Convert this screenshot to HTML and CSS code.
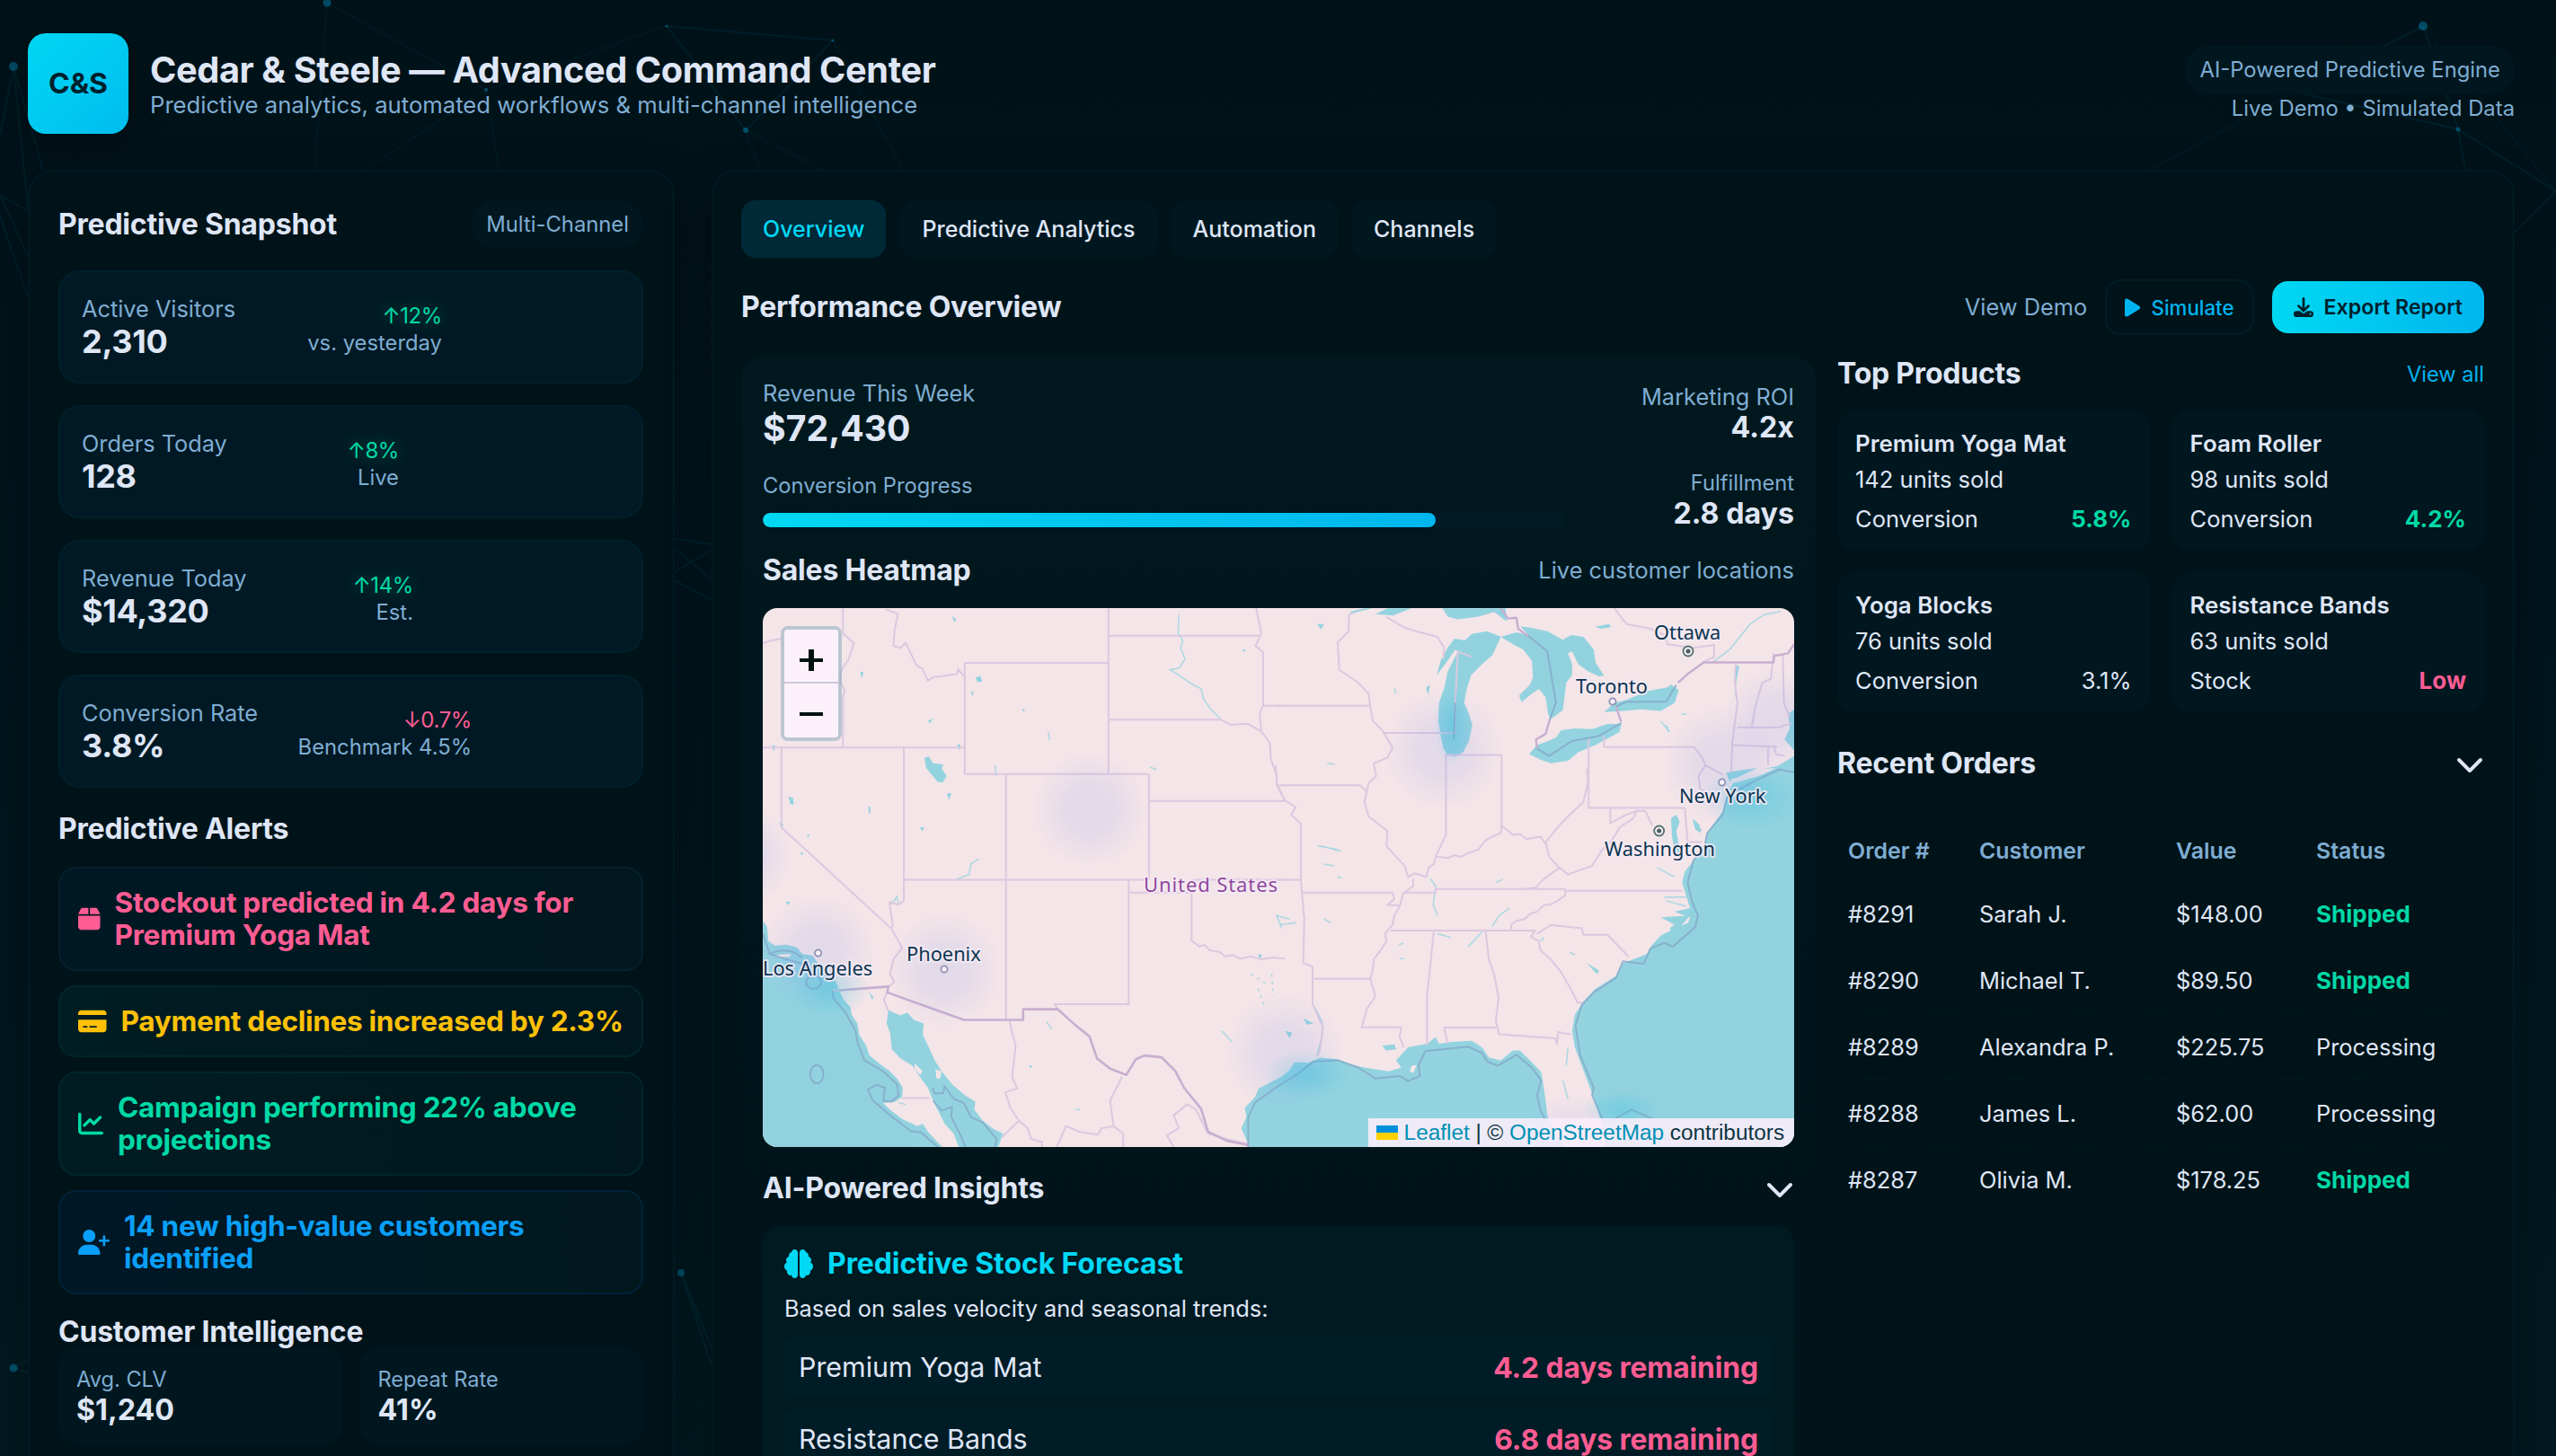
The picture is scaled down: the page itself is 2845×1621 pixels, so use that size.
FILE: index.html
```html
<!DOCTYPE html>
<html lang="en">
<head>
<meta charset="utf-8">
<title>Cedar &amp; Steele — Advanced Command Center</title>
<link rel="stylesheet" href="styles.css">
</head>
<body>
<svg class="network" viewBox="0 0 2845 1621" aria-hidden="true">
  <g fill="none" stroke="#00b4f0" stroke-width="2">
    <path opacity=".08" d="M742 29L927 45L830 145Z"/>
    <path opacity=".04" d="M364 3L541 100L742 29M364 3L350 190M541 100L405 190M541 100L556 190M830 145L846 190M830 145L918 190M927 45L1006 190"/>
    <path opacity=".07" d="M15 74L0 150M15 74L32 240M15 74L48 190M0 217L31 235M0 217L31 285M0 240L31 330"/>
    <path opacity=".08" d="M2697 29L2554 102L2736 144L2845 213L2798 260M2697 29L2736 144L2744 190"/>
    <path opacity=".04" d="M2554 102L2392 190M2697 29L2845 213"/>
    <path opacity=".08" d="M751 600L792 606M751 611L792 645M751 637L792 612M751 646L792 668M758 1417L792 1520M758 1417L792 1500M15 1523L31 1528M15 1523L31 1514"/>
  </g>
  <g fill="#00b4f0" opacity=".34">
    <circle cx="364" cy="3" r="4.5"/><circle cx="15" cy="74" r="5"/><circle cx="541" cy="100" r="2"/><circle cx="830" cy="145" r="3"/><circle cx="742" cy="29" r="1.5"/><circle cx="927" cy="45" r="1.5"/>
    <circle cx="2697" cy="29" r="5"/><circle cx="2554" cy="102" r="2"/><circle cx="2736" cy="144" r="2.5"/><circle cx="758" cy="1417" r="4"/><circle cx="15" cy="1523" r="4.5"/>
  </g>
</svg>

<header class="header">
  <div class="logo">C&amp;S</div>
  <div class="brand">
    <h1 class="brand-title">Cedar &amp; Steele — Advanced Command Center</h1>
    <p class="brand-sub">Predictive analytics, automated workflows &amp; multi-channel intelligence</p>
  </div>
  <div class="header-meta">
    <span class="pill">AI-Powered Predictive Engine</span>
    <span class="meta-line">Live Demo • Simulated Data</span>
  </div>
</header>

<div class="layout">
  <aside class="panel panel-left">
    <div class="row">
      <h2 class="heading">Predictive Snapshot</h2>
      <span class="pill">Multi-Channel</span>
    </div>
    <div class="kpis">
      <div class="kpi"><div class="kpi-body kpi-visitors">
        <div><div class="label">Active Visitors</div><div class="kpi-value">2,310</div></div>
        <div class="kpi-side"><div class="delta up">↑12%</div><div class="kpi-note">vs. yesterday</div></div>
      </div></div>
      <div class="kpi"><div class="kpi-body kpi-orders">
        <div><div class="label">Orders Today</div><div class="kpi-value">128</div></div>
        <div class="kpi-side"><div class="delta up">↑8%</div><div class="kpi-note">Live</div></div>
      </div></div>
      <div class="kpi"><div class="kpi-body kpi-revenue">
        <div><div class="label">Revenue Today</div><div class="kpi-value">$14,320</div></div>
        <div class="kpi-side"><div class="delta up">↑14%</div><div class="kpi-note">Est.</div></div>
      </div></div>
      <div class="kpi"><div class="kpi-body kpi-conversion">
        <div><div class="label">Conversion Rate</div><div class="kpi-value">3.8%</div></div>
        <div class="kpi-side"><div class="delta down">↓0.7%</div><div class="kpi-note">Benchmark 4.5%</div></div>
      </div></div>
    </div>

    <h2 class="heading alerts-heading">Predictive Alerts</h2>
    <div class="alerts">
      <div class="alert alert-danger">
        <svg class="fa" viewBox="0 0 448 512"><path d="M50.7 58.5L0 160H208V32H93.7C75.5 32 58.9 42.3 50.7 58.5zM240 160H448L397.3 58.5C389.1 42.3 372.5 32 354.3 32H240V160zm208 32H0V416c0 35.3 28.7 64 64 64H384c35.3 0 64-28.7 64-64V192z"/></svg>
        <span>Stockout predicted in 4.2 days for Premium Yoga Mat</span>
      </div>
      <div class="alert alert-warn">
        <svg class="fa" viewBox="0 0 576 512"><path d="M64 32C28.7 32 0 60.7 0 96v32H576V96c0-35.3-28.7-64-64-64H64zM576 224H0V416c0 35.3 28.7 64 64 64H512c35.3 0 64-28.7 64-64V224zM112 352h64c8.8 0 16 7.2 16 16s-7.2 16-16 16H112c-8.8 0-16-7.2-16-16s7.2-16 16-16zm112 16c0-8.8 7.2-16 16-16H368c8.8 0 16 7.2 16 16s-7.2 16-16 16H240c-8.8 0-16-7.2-16-16z"/></svg>
        <span>Payment declines increased by 2.3%</span>
      </div>
      <div class="alert alert-good">
        <svg class="fa" viewBox="0 0 512 512"><path d="M64 64c0-17.7-14.3-32-32-32S0 46.3 0 64V400c0 44.2 35.8 80 80 80H480c17.7 0 32-14.3 32-32s-14.3-32-32-32H80c-8.8 0-16-7.2-16-16V64zm406.600 86.600c12.500-12.500 12.500-32.800 0-45.300s-32.800-12.500-45.300 0L320 210.700l-57.400-57.400c-12.500-12.500-32.800-12.500-45.300 0l-112 112c-12.500 12.500-12.500 32.800 0 45.300s32.800 12.500 45.300 0L240 221.300l57.400 57.400c12.500 12.500 32.800 12.500 45.300 0l128-128z"/></svg>
        <span>Campaign performing 22% above projections</span>
      </div>
      <div class="alert alert-info">
        <svg class="fa" viewBox="0 0 640 512"><path d="M96 128a128 128 0 1 1 256 0A128 128 0 1 1 96 128zM0 482.3C0 383.8 79.8 304 178.3 304h91.400C368.200 304 448 383.800 448 482.300c0 16.400-13.300 29.700-29.700 29.700H29.700C13.300 512 0 498.700 0 482.300zM504 312V248H440c-13.300 0-24-10.700-24-24s10.700-24 24-24h64V136c0-13.300 10.700-24 24-24s24 10.700 24 24v64h64c13.300 0 24 10.700 24 24s-10.700 24-24 24H552v64c0 13.300-10.700 24-24 24s-24-10.700-24-24z"/></svg>
        <span>14 new high-value customers identified</span>
      </div>
    </div>

    <h2 class="heading intel-heading">Customer Intelligence</h2>
    <div class="intel">
      <div class="intel-card"><div class="intel-label">Avg. CLV</div><div class="stat-value">$1,240</div></div>
      <div class="intel-card"><div class="intel-label">Repeat Rate</div><div class="stat-value">41%</div></div>
    </div>
  </aside>

  <main class="panel panel-main">
    <nav class="tabs">
      <span class="tab tab-active">Overview</span>
      <span class="tab">Predictive Analytics</span>
      <span class="tab">Automation</span>
      <span class="tab">Channels</span>
    </nav>
    <div class="toolbar">
      <h2 class="heading">Performance Overview</h2>
      <div class="actions">
        <span class="label">View Demo</span>
        <button class="btn btn-ghost"><svg viewBox="0 0 384 512"><path d="M73 39c-14.800-9.100-33.400-9.400-48.500-.9S0 62.600 0 80V432c0 17.400 9.400 33.400 24.500 41.900s33.700 8.100 48.500-.9L361 297c14.300-8.700 23-24.200 23-41s-8.700-32.200-23-41L73 39z"/></svg>Simulate</button>
        <button class="btn btn-primary"><svg viewBox="0 0 512 512"><path d="M288 32c0-17.700-14.300-32-32-32s-32 14.300-32 32V274.700l-73.400-73.400c-12.500-12.500-32.800-12.500-45.300 0s-12.500 32.800 0 45.300l128 128c12.500 12.500 32.800 12.500 45.300 0l128-128c12.500-12.500 12.500-32.800 0-45.300s-32.800-12.500-45.300 0L288 274.700V32zM64 352c-35.300 0-64 28.700-64 64v32c0 35.300 28.700 64 64 64H448c35.300 0 64-28.700 64-64V416c0-35.300-28.700-64-64-64H346.500l-45.300 45.300c-25 25-65.500 25-90.500 0L165.500 352H64zm368 56a24 24 0 1 1 0 48 24 24 0 1 1 0-48z"/></svg>Export Report</button>
      </div>
    </div>

    <div class="columns">
      <section class="perf">
        <div class="row">
          <div><div class="label rev-label">Revenue This Week</div><div class="rev-value">$72,430</div></div>
          <div class="right"><div class="label">Marketing ROI</div><div class="stat-value tight">4.2x</div></div>
        </div>
        <div class="row progress-row">
          <div class="progress-block">
            <div class="small-label">Conversion Progress</div>
            <div class="progress"><div class="progress-fill" style="width:84%"></div></div>
          </div>
          <div class="right"><div class="small-label">Fulfillment</div><div class="stat-value tight">2.8 days</div></div>
        </div>
        <div class="row heat-head">
          <h2 class="heading">Sales Heatmap</h2>
          <span class="label">Live customer locations</span>
        </div>
        <div class="map">
          <svg class="map-canvas" viewBox="0 0 1148 600">
            <defs>
              <radialGradient id="heat"><stop offset="0" stop-color="#6f8cf0" stop-opacity=".13"/><stop offset=".45" stop-color="#6f8cf0" stop-opacity=".11"/><stop offset="1" stop-color="#8f8cf0" stop-opacity="0"/></radialGradient>
              <radialGradient id="heatSea"><stop offset="0" stop-color="#30bfe0" stop-opacity=".3"/><stop offset="1" stop-color="#30bfe0" stop-opacity="0"/></radialGradient>
            </defs>
            <rect width="1148" height="600" fill="#f3e5e8"/>
            <!-- western half -->
            <g transform="translate(-19 -17) scale(.38266 .40816)">
              <g fill="#93d3df">
                <path d="M50 895L62 910L66 950L85 962L120 960L150 968L165 985L195 990L210 1010L240 1040L262 1060L272 1085L285 1110L305 1130L308 1150L325 1175L330 1205L350 1235L360 1262L390 1285L420 1305L440 1325L457 1350L455 1375L435 1388L400 1392L420 1410L455 1435L500 1455L515 1448L530 1470L572 1512L50 1512Z"/>
                <path d="M415 1138L430 1145L450 1153L470 1145L490 1165L518 1175L515 1205L530 1235L550 1275L570 1305L600 1340L640 1372L668 1388L665 1410L690 1440L720 1462L748 1475L735 1512L620 1512L605 1475L580 1450L550 1395L530 1350L510 1325L485 1290L450 1270L425 1245L420 1200L410 1175Z"/>
                <path d="M520 450L532 446L545 465L575 468L570 480L585 500L572 518L558 515L540 495L525 478ZM75 418L86 416L82 432ZM98 626L110 632L104 645ZM124 555L138 560L140 578L130 576ZM615 412L625 415L622 432ZM668 232L682 226L688 242L675 244ZM585 548L598 546L592 565ZM506 640L520 640L514 650ZM116 842L130 844L122 852ZM530 350L545 342L536 356ZM598 62L612 72L608 80ZM358 1088L372 1104L368 1110ZM1490 985L1502 988L1495 1000ZM334 215L342 216L340 230L335 228ZM805 316L812 318L808 326ZM656 268L663 270L659 284ZM357 583L363 583L362 604L358 600ZM178 658L186 660L182 668ZM158 708L168 710L164 716ZM824 1288L833 1290L829 1298ZM1445 154L1455 155L1450 162Z"/>
              </g>
              <g fill="#f3e5e8"><path d="M490 1282L515 1305L508 1315L492 1300ZM552 1300L570 1305L566 1325L555 1325ZM90 988L130 985L130 992L95 994Z"/></g>
              <g fill="none" stroke="#93d3df" stroke-width="1.500" stroke-opacity=".75">
                <path vector-effect="non-scaling-stroke" d="M1260 60L1258 110L1272 130L1265 150L1278 180L1262 205L1235 210L1260 225L1300 250L1325 262L1332 290L1355 320L1382 345M612 782L650 768L655 740L678 725M418 845L432 840L440 828L445 850M726 470L728 500M880 380L884 402M1175 475L1195 482M1545 880L1560 915M875 1170L890 1190M960 1408L972 1410M1385 1195L1415 1225M445 1390L465 1396"/>
                <path vector-effect="non-scaling-stroke" stroke-dasharray="3 5" d="M1470 1040L1520 1070M1490 1080L1510 1130M1530 1040L1535 1100"/>
              </g>
              <g fill="none" stroke="#dcc8df" stroke-width="2" stroke-linejoin="round">
                <path vector-effect="non-scaling-stroke" d="M283 42V110L315 138L300 180L276 215V245L288 265L283 285V422M50 138L75 130L105 125M50 422H637M104 422V640L424 916M460 422V840L445 850L418 845L428 905L424 916L455 968L430 1000L420 1040L432 1062L415 1075M637 191H1055M637 191V494H1170M757 494V1165M460 783H1170M1055 42V494M1058 117H1497M1058 346H1382L1410 360L1460 357L1500 378M1173 494V783M1173 568H1568M1505 308H1568M1114 783V1122H898L908 1136M1118 818H1297V948L1320 965L1335 960L1350 975L1380 980L1395 992L1415 988L1440 998L1470 992L1500 1000L1530 995L1568 998M1297 783H1568M408 45L443 58L433 100L430 145L450 150L465 136L480 165L497 198L515 208L530 240L545 230L570 228L590 224L615 222L618 208L637 230M1485 42L1500 110L1483 145L1505 162V308L1495 330L1500 378L1525 410L1528 455L1545 500V525L1568 565M252 1085L272 1084L415 1075M768 1168L775 1200L785 1235L775 1320L790 1352L755 1362L770 1405L795 1440L745 1485M795 1440L820 1460L830 1490L862 1498V1512M905 1512L932 1454L970 1470L1025 1478L1035 1460L1070 1455L1060 1385L1095 1320M1070 1455L1098 1475V1512M455 1378H535M410 1092L402 1110L415 1140M1465 1505L1400 1490L1345 1475L1310 1410L1285 1395L1245 1425L1260 1460L1225 1480L1245 1512"/>
              </g>
              <g fill="none" stroke="#c8aed0" stroke-width="2.600" stroke-linejoin="round">
                <path vector-effect="non-scaling-stroke" d="M272 1084L415 1074L412 1090L635 1165H807V1136H908L960 1180L1000 1210L1022 1270L1060 1298L1107 1315L1135 1272L1160 1262L1210 1267L1250 1305L1275 1350L1325 1408L1345 1470L1400 1495L1465 1507"/>
              </g>
              <g fill="none" stroke="#85a9c9" stroke-width="2" stroke-linejoin="round" opacity=".8">
                <path vector-effect="non-scaling-stroke" d="M50 930L70 985L120 1000L175 1015L195 1050M252 1085L255 1105L290 1145L320 1195L325 1225L345 1275L400 1305L440 1340L445 1370L425 1388L400 1385L405 1350L380 1342L355 1355L370 1385L420 1425L480 1468L510 1472L560 1512M545 1350L548 1365L575 1365L578 1345L605 1380L635 1392L655 1430L690 1445L730 1490L725 1512M545 1385L570 1412L600 1402L598 1430L625 1480L640 1512"/>
                <ellipse vector-effect="non-scaling-stroke" cx="207" cy="1313" rx="19" ry="25"/><ellipse vector-effect="non-scaling-stroke" cx="198" cy="1062" rx="22" ry="18"/>
                <path vector-effect="non-scaling-stroke" d="M70 985Q100 970 140 980L165 995"/>
              </g>
            </g>
            <!-- eastern half -->
            <g transform="translate(571 -17) scale(.38266 .40816)">
              <g fill="#93d3df">
                <path d="M-76 1512L-100 1460L-85 1430L-90 1405L-60 1375L-50 1352L-20 1338L20 1318L40 1302L55 1280L95 1282L130 1268L180 1272L230 1290L290 1300L330 1305L365 1295L350 1275L385 1240L440 1230L465 1212L475 1230L510 1225L570 1222L600 1240L620 1268L655 1275L690 1248L710 1248L745 1280L772 1308L778 1340L785 1385L790 1425L810 1470L840 1512Z"/>
                <path d="M1508 445L1460 472L1420 480L1330 520L1312 550L1305 590L1255 655L1245 690L1220 725L1190 760L1182 790L1195 830L1205 860L1160 870L1205 885L1200 900L1150 920L1120 935L1095 960L1080 985L1045 998L1010 1010L990 1045L930 1080L895 1115L870 1150L862 1195L870 1240L890 1290L912 1345L930 1390L945 1440L960 1512L1508 1512Z"/>
                <path d="M215 52L260 42H280L225 55ZM290 58L325 42H395L340 62ZM485 42L500 65L530 72L590 65L635 52L672 78L668 42Z"/>
                <path d="M500 215L490 260L475 300L473 350L480 390L488 425L500 442L520 447L545 435L562 405L572 360L560 325L548 300L555 265L568 225L600 195L630 170L645 140L655 120L615 105L570 112L550 130L520 125L500 150L480 185L468 225L500 185L522 155L530 160Z"/>
                <path d="M655 120L690 140L720 155L745 185L748 230L740 250L708 280L715 298L745 275L765 262L785 285L792 330L800 345L835 320L840 285L845 245L862 225V195L850 165L862 160L880 195L910 215L940 228L955 226L930 190L925 155L895 120L860 115L835 128L790 105L740 95L712 92L735 115L700 108Z"/>
                <path d="M737 440L760 415L790 405L815 395L830 375L870 370L920 372L965 358H1005L1000 380L960 400L930 415L880 435L850 458L800 465L770 455Z"/>
                <path d="M955 325L985 300L1020 292L1080 268L1140 258L1150 250L1172 265L1160 300L1120 322L1060 318L1010 322Z"/>
                <path d="M1490 330L1508 318V430L1480 400L1495 370ZM1150 615L1165 605L1175 625L1165 650L1172 685L1180 710L1160 705L1152 660ZM1212 615L1240 640L1235 655L1220 645ZM1335 195L1348 200L1340 240L1336 290ZM120 85H140L132 100ZM437 260L448 250L444 280ZM930 92L970 85L975 94L945 98ZM905 1010L940 1030L935 1040ZM80 1160L110 1175L90 1178ZM28 1195L48 1200L40 1215ZM310 1235L345 1232L350 1245L320 1248ZM1120 885L1205 880L1160 930L1145 915L1160 905ZM1310 490L1400 478L1320 515Z"/>
              </g>
              <path fill="#f3e5e8" d="M1320 510L1420 480L1455 478L1410 498L1340 518ZM1240 620L1260 625L1245 650L1232 640ZM395 1290L410 1288L400 1310L390 1305Z"/>
              <g fill="none" stroke="#93d3df" stroke-width="1.500" stroke-opacity=".75">
                <path vector-effect="non-scaling-stroke" d="M1270 190L1320 155L1350 120L1380 85L1420 60L1470 50M345 260L350 275M450 780L465 800L458 850L470 880M630 910L650 880L680 860M640 790L660 782M180 775L190 778M150 465L170 468M1120 350L1145 380L1135 360M1180 330L1195 332M1110 750L1160 775M1135 840L1195 855M110 1125L135 1170V1210L120 1260M850 1240L845 1290M835 1330L850 1380M855 980L870 988M130 690L190 705M140 740L170 745M358 960L372 955M360 998L372 998M1130 830H1195M470 930L510 940M560 965L600 925M770 950L780 940M120 690L180 700M140 890L160 900M0 880L40 890M10 905L60 900"/>
              </g>
              <g fill="none" stroke="#dcc8df" stroke-width="2" stroke-linejoin="round">
                <path vector-effect="non-scaling-stroke" d="M225 55L213 60L212 105L180 135L185 210L240 245L270 275L275 310L283 350L310 375L340 422L325 450L285 465L292 500L270 520L265 540L258 570L270 610L325 650L322 690L350 720L375 745L385 775L405 765L438 775L445 750L460 740L465 720L495 660V442M310 382H522V300L530 160L570 175M0 308H272M10 525H245L262 540M0 470L3 520L25 565L58 585L45 605L73 630V783H0M73 783L83 890L80 1010L107 1020V1122L125 1160L137 1185L128 1250L120 1265M75 818H340L345 835L325 852H362L370 820L400 800V780M375 818H465V808H842V825L820 840L800 850L780 852L760 870L740 875L725 890L700 895L685 905V920M842 813H1182M335 921H755L742 938L765 950L770 975L800 1000L830 1035L855 1075L878 1118L892 1118M362 852L345 880L340 905L318 930L322 950L305 975L285 1000L282 1030L275 1052L290 1100L265 1135L250 1185H365L360 1210L372 1240M107 1053H277M460 921L440 1100V1235M610 921L620 1000L635 1040L648 1105L640 1170L650 1204L812 1215L818 1230L822 1198L858 1205M640 1186H490L500 1230M492 442H657M657 442V635L690 660L710 658L730 672L750 668L770 665L785 685M657 635L655 655L630 665L610 675L590 700L560 710L540 720L520 716L500 723L465 720M910 398V587H1190M905 480L908 520L895 570L850 610L820 640L785 680L795 720L825 750L850 768L880 758L920 745L950 700L975 680L1000 640L1040 615L1050 595L1075 595L1095 635M973 590V628L1020 605L1050 595M825 750L780 780L755 805L720 808M955 390V421H1218L1240 450L1250 470L1302 497M1250 470L1230 500L1235 535L1255 545M1190 587L1198 680H1240M1338 195L1335 240L1343 300L1328 410L1325 490M1343 367H1465L1500 355M1328 415L1460 420M1432 420V470M1385 365L1395 310L1415 245L1440 235L1448 165M1475 170L1478 300L1495 340M760 930L800 906L890 915L895 933H965L1027 993M320 65L375 95L420 108L470 120L490 150L488 180M985 42L1020 85L1090 98L1130 115L1140 140L1215 150L1275 142V175L1240 190M1450 420L1455 440L1480 445"/>
              </g>
              <g fill="none" stroke="#c8aed0" stroke-width="2.400" stroke-linejoin="round">
                <path vector-effect="non-scaling-stroke" d="M1170 245L1200 220L1245 190H1448L1450 172L1490 165L1508 140M655 42L675 70L700 68L705 98L735 118M797 345L785 385L757 400L760 425M1005 352L995 325L990 310"/>
              </g>
              <g fill="none" stroke="#85a9c9" stroke-width="2" stroke-linejoin="round" opacity=".8">
                <path vector-effect="non-scaling-stroke" d="M735 118L790 160L815 300L797 345M760 425L795 445L860 405L940 390L1005 355M990 310L1020 297H1135L1165 252M522 300L518 400M-80 1512L-80 1430L-60 1390L0 1350L60 1315L110 1278L180 1275L240 1295L290 1325L360 1318L385 1332L420 1318L415 1290L435 1250L560 1238L600 1255L615 1278L645 1290L700 1260L745 1295L772 1330L760 1370L770 1412L785 1440M1508 490L1465 482L1400 510L1330 545L1312 560L1300 605L1255 655L1248 690L1215 730L1198 790L1210 840L1228 880L1220 912L1155 965L1130 955L1090 970L1070 1012L1010 1005L990 1050L925 1090L890 1125L872 1180L885 1260L925 1350L920 1370L950 1435M985 1435L1035 1410L1110 1440"/>
              </g>
            </g>
            <g fill="url(#heat)">
              <circle cx="364" cy="224" r="64"/><circle cx="61" cy="383" r="64"/><circle cx="202" cy="403" r="64"/><circle cx="581" cy="495" r="66"/><circle cx="757" cy="158" r="66"/><circle cx="1067" cy="175" r="66"/><circle cx="1128" cy="125" r="60"/><circle cx="-24" cy="275" r="56"/><circle cx="900" cy="600" r="60"/>
            </g>
            <g fill="url(#heatSea)">
              <ellipse cx="75" cy="425" rx="44" ry="30"/><ellipse cx="606" cy="520" rx="50" ry="28"/><ellipse cx="767" cy="130" rx="20" ry="46"/><ellipse cx="1100" cy="212" rx="56" ry="36"/><ellipse cx="955" cy="558" rx="44" ry="20"/>
            </g>
            <g fill="#f9eef6" stroke="#8d93b5" stroke-width="1.800">
              <circle cx="61.700" cy="384" r="3.600"/><circle cx="202" cy="402" r="3.600"/><circle cx="946" cy="104" r="3.600"/><circle cx="1067.700" cy="194" r="3.600"/>
              <g stroke="#56706f"><circle cx="1030" cy="48" r="5.500"/><circle cx="997.700" cy="248" r="5.500"/></g>
            </g>
            <g fill="#45605f"><circle cx="1030" cy="48" r="2.500"/><circle cx="997.700" cy="248" r="2.500"/></g>
            <g class="map-labels">
              <text x="0" y="409">Los Angeles</text>
              <text x="160" y="393">Phoenix</text>
              <text x="992" y="35">Ottawa</text>
              <text x="905" y="95">Toronto</text>
              <text x="1020" y="217">New York</text>
              <text x="937" y="276">Washington</text>
              <text class="country" x="424" y="315.500">United States</text>
            </g>
          </svg>
          <div class="zoom"><span class="zoom-btn zoom-in"></span><span class="zoom-btn zoom-out"></span></div>
          <div class="attribution"><span class="flag"></span><a>Leaflet</a><span>|</span><span>©</span><a>OpenStreetMap</a><span>contributors</span></div>
        </div>

        <div class="row insights-head">
          <h2 class="heading">AI-Powered Insights</h2>
          <svg class="chevron" viewBox="0 0 512 512"><path d="M233.400 406.600c12.500 12.500 32.800 12.500 45.300 0l192-192c12.500-12.500 12.500-32.800 0-45.300s-32.800-12.500-45.300 0L256 338.700 86.600 169.400c-12.500-12.500-32.800-12.500-45.300 0s-12.500 32.800 0 45.300l192 192z"/></svg>
        </div>
        <div class="insight">
          <div class="insight-title">
            <svg viewBox="0 0 512 512"><path d="M184 0c30.900 0 56 25.100 56 56V456c0 30.900-25.100 56-56 56c-28.900 0-52.700-21.900-55.700-50.100c-5.200 1.400-10.700 2.100-16.300 2.100c-35.300 0-64-28.700-64-64c0-7.400 1.300-14.600 3.600-21.200C21.400 367.400 0 338.200 0 304c0-31.900 18.700-59.500 45.800-72.300C37.100 220.800 32 207 32 192c0-30.700 21.600-56.300 50.400-62.600C80.800 123.900 80 118 80 112c0-29.900 20.600-55.100 48.300-62.100C131.300 21.900 155.100 0 184 0zM328 0c28.900 0 52.600 21.900 55.700 49.900c27.800 7 48.300 32.100 48.300 62.100c0 6-.8 11.900-2.400 17.400c28.800 6.200 50.400 31.900 50.400 62.600c0 15-5.100 28.800-13.800 39.700C493.300 244.500 512 272.100 512 304c0 34.200-21.400 63.400-51.600 74.800c2.300 6.600 3.600 13.800 3.600 21.200c0 35.300-28.700 64-64 64c-5.600 0-11.100-.7-16.300-2.100c-3 28.200-26.800 50.100-55.700 50.100c-30.900 0-56-25.100-56-56V56c0-30.900 25.100-56 56-56z"/></svg>
            <span>Predictive Stock Forecast</span>
          </div>
          <p class="insight-text">Based on sales velocity and seasonal trends:</p>
          <div class="forecast"><span>Premium Yoga Mat</span><strong>4.2 days remaining</strong></div>
          <div class="forecast"><span>Resistance Bands</span><strong>6.8 days remaining</strong></div>
        </div>
      </section>

      <section class="side">
        <div class="row">
          <h2 class="heading">Top Products</h2>
          <a class="view-all">View all</a>
        </div>
        <div class="products">
          <div class="product"><b>Premium Yoga Mat</b><span>142 units sold</span><div class="product-stat"><span>Conversion</span><strong class="good">5.8%</strong></div></div>
          <div class="product"><b>Foam Roller</b><span>98 units sold</span><div class="product-stat"><span>Conversion</span><strong class="good">4.2%</strong></div></div>
          <div class="product"><b>Yoga Blocks</b><span>76 units sold</span><div class="product-stat"><span>Conversion</span><span>3.1%</span></div></div>
          <div class="product"><b>Resistance Bands</b><span>63 units sold</span><div class="product-stat"><span>Stock</span><strong class="bad">Low</strong></div></div>
        </div>
        <div class="row orders-head">
          <h2 class="heading">Recent Orders</h2>
          <svg class="chevron" viewBox="0 0 512 512"><path d="M233.400 406.600c12.500 12.500 32.800 12.500 45.300 0l192-192c12.500-12.500 12.500-32.800 0-45.300s-32.800-12.500-45.300 0L256 338.700 86.600 169.400c-12.500-12.500-32.800-12.500-45.300 0s-12.500 32.800 0 45.300l192 192z"/></svg>
        </div>
        <div class="orders">
          <div class="order order-header"><span>Order #</span><span>Customer</span><span>Value</span><span>Status</span></div>
          <div class="order"><span>#8291</span><span>Sarah J.</span><span>$148.00</span><strong class="good">Shipped</strong></div>
          <div class="order"><span>#8290</span><span>Michael T.</span><span>$89.50</span><strong class="good">Shipped</strong></div>
          <div class="order"><span>#8289</span><span>Alexandra P.</span><span>$225.75</span><span>Processing</span></div>
          <div class="order"><span>#8288</span><span>James L.</span><span>$62.00</span><span>Processing</span></div>
          <div class="order"><span>#8287</span><span>Olivia M.</span><span>$178.25</span><strong class="good">Shipped</strong></div>
        </div>
      </section>
    </div>
  </main>
</div>
</body>
</html>
```
FILE: styles.css
```css
* { box-sizing: border-box; margin: 0; padding: 0; }

body {
  width: 2845px;
  height: 1621px;
  overflow: hidden;
  position: relative;
  padding: 37px 46px 0 31px;
  font-family: Inter, "Liberation Sans", sans-serif;
  color: #dfe6f6;
  background: linear-gradient(180deg, #001218 0%, #00151c 40%, #00191f 100%);
}

.network { position: absolute; left: 0; top: 0; width: 2845px; height: 1621px; }

.header { position: relative; display: flex; align-items: center; height: 112px; }
.logo {
  width: 112px; height: 112px; margin-right: 24px; border-radius: 20px;
  background: linear-gradient(135deg, #00d6f2, #00bdf0);
  box-shadow: 0 12px 36px rgba(0, 0, 0, .3);
  color: #00202c; font-size: 31.9px; font-weight: 700; line-height: 112px; text-align: center;
}
.brand { padding-top: 3px; }
.brand-title { font-size: 39.7px; font-weight: 700; letter-spacing: -.38px; line-height: 44px; white-space: nowrap; }
.brand-sub { font-size: 25.65px; line-height: 34px; color: #7fadd2; white-space: nowrap; }
.header-meta { margin-left: auto; padding-top: 2px; display: flex; flex-direction: column; align-items: flex-end; }
.pill {
  height: 54px; padding: 0 16px; border-radius: 27px; line-height: 54px;
  font-size: 23.8px; color: #7fadd2; background: #001720; white-space: nowrap;
}
.meta-line { font-size: 23.8px; line-height: 32px; color: #7fadd2; }

.layout { display: flex; align-items: flex-start; gap: 41px; height: 1432px; margin-top: 40px; position: relative; }
.panel {
  height: 1432px; overflow: hidden; border: 2px solid #011a23; border-bottom: 0; border-radius: 28px 28px 0 0;
  background: #001319; box-shadow: 0 16px 48px rgba(0, 0, 0, .3);
}
.panel-left { flex: none; width: 720px; padding: 32px 33px 0 32px; }
.panel-main { flex: 1; padding: 32px 32px 0 31px; }

.row { display: flex; justify-content: space-between; align-items: center; }
.heading { font-size: 32px; font-weight: 700; letter-spacing: -.22px; line-height: 38px; }
.label { font-size: 25.4px; line-height: 32px; color: #7fadd2; }
.small-label { font-size: 23.7px; line-height: 32px; color: #7fadd2; }
.right { text-align: right; }

.kpis { display: flex; flex-direction: column; gap: 24px; margin-top: 24px; }
.kpi {
  height: 126px; padding: 0 24px; border: 2px solid #01202b; border-radius: 24px;
  background: #001924; display: flex; align-items: center;
}
.kpi .label { font-size: 25.3px; }
.kpi-body { display: flex; justify-content: space-between; align-items: center; }
.kpi-visitors { width: 401px; }
.kpi-orders { width: 353px; }
.kpi-revenue { width: 369px; }
.kpi-conversion { width: 434px; }
.kpi-value { font-size: 36px; font-weight: 650; letter-spacing: -.3px; line-height: 41px; }
.kpi-side { text-align: right; padding-top: 6px; }
.delta { font-size: 24px; line-height: 30px; letter-spacing: -.4px; }
.up { color: #00d9a6; text-shadow: 0 0 20px rgba(0, 217, 166, .45); }
.down { color: #ff5c93; }
.kpi-note { font-size: 23.8px; line-height: 30px; color: #7fadd2; }

.alerts-heading { margin-top: 27px; }
.alerts { display: flex; flex-direction: column; gap: 16px; margin-top: 23px; }
.alert {
  display: flex; align-items: center; gap: 16px; padding: 20px 8px 20px 20px;
  border: 2px solid; border-radius: 20px;
  font-size: 31.6px; font-weight: 650; letter-spacing: -.31px; line-height: 36px;
}
.alert span { max-width: 560px; }
.fa { height: 28px; flex: none; fill: currentColor; }
.alert-danger { color: #ff5c93; border-color: #06202d; background: linear-gradient(90deg, #001824, #00181d); }
.alert-warn { color: #ffc107; border-color: #02262a; background: linear-gradient(90deg, #001d22, #00171e); }
.alert-good { color: #00d9a6; border-color: #00262b; background: linear-gradient(90deg, #001c23, #00181d); }
.alert-info { color: #0a9ff8; border-color: #002238; background: linear-gradient(90deg, #001826, #00181d); }

.intel-heading { margin-top: 24px; line-height: 36px; }
.intel { display: grid; grid-template-columns: 1fr 1fr; gap: 20px; }
.intel-card { height: 106px; padding: 20px; border-radius: 20px; background: #001720; }
.intel-label { font-size: 23.6px; line-height: 30px; color: #7fadd2; }
.stat-value { font-size: 32.2px; font-weight: 700; line-height: 38px; }
.tight { line-height: 36px; }

.tabs { display: flex; gap: 16px; }
.tab {
  padding: 0 24px; border-radius: 16px; background: #001720;
  font-size: 25px; font-weight: 500; line-height: 64px;
}
.tab-active { background: #002938; color: #00d8f5; }

.toolbar { display: flex; justify-content: space-between; align-items: center; height: 62px; margin-top: 24px; }
.actions { display: flex; align-items: center; gap: 20px; }
.btn { display: flex; align-items: center; border: 0; font-family: inherit; border-radius: 18px; }
.btn svg { fill: currentColor; margin-right: 12px; }
.btn-ghost {
  height: 62px; padding: 0 20px; border: 2px solid #011c26; background: none;
  color: #00b4ef; font-size: 22.3px; font-weight: 500;
}
.btn-ghost svg { height: 23px; }
.btn-primary {
  height: 58px; padding: 0 24px; background: linear-gradient(90deg, #00d8f2, #00b6ee);
  color: #00202c; font-size: 23.2px; font-weight: 600;
}
.btn-primary svg { height: 22px; }

.columns { display: grid; grid-template-columns: 1196px 1fr; gap: 24px; margin-top: 24px; }
.perf { height: 1222px; padding: 24px; border-radius: 24px 24px 0 0; background: linear-gradient(180deg, #00181e 0%, #001319 100%); }
.rev-label { line-height: 34px; }
.rev-value { font-size: 39.2px; font-weight: 700; line-height: 44px; }
.progress-row { margin-top: 23px; }
.progress-block { width: 892px; }
.progress { height: 16px; margin-top: 14px; border-radius: 8px; background: #001b25; overflow: hidden; }
.progress-fill { height: 16px; border-radius: 8px; background: linear-gradient(90deg, #00d8f2, #00b6ee); }
.heat-head { margin-top: 26px; }

.map { position: relative; height: 600px; margin-top: 23px; border-radius: 16px; overflow: hidden; }
.map-canvas { display: block; width: 1148px; height: 600px; }
.map-labels { font-family: "Noto Sans", sans-serif; font-size: 21.8px; fill: #0c3550; stroke: #f6ebf6; stroke-opacity: .8; stroke-width: 4px; paint-order: stroke; stroke-linejoin: round; }
.country { font-size: 22px; letter-spacing: .9px; fill: #8e4a9e; }
.zoom {
  position: absolute; left: 20px; top: 20px; width: 68px; height: 128px;
  border: 4px solid rgba(122, 160, 180, .45); border-radius: 8px; background-clip: padding-box;
}
.zoom-btn { position: relative; display: block; height: 60px; background: #fcf1fb; }
.zoom-in { border-bottom: 2px solid #c9c9dc; border-radius: 4px 4px 0 0; }
.zoom-out { border-radius: 0 0 4px 4px; }
.zoom-btn::before, .zoom-in::after { content: ""; position: absolute; background: #00120f; }
.zoom-btn::before { left: 17px; top: 32px; width: 26px; height: 4px; }
.zoom-in::after { left: 27px; top: 22px; width: 6px; height: 24px; }
.attribution {
  position: absolute; right: 0; bottom: 0; height: 32px; width: 474px; padding-left: 9px;
  display: flex; align-items: center; gap: 6.6px; background: rgba(251, 238, 250, .88);
  font-family: "Liberation Sans", sans-serif; font-size: 24.4px; color: #0d3440; white-space: nowrap;
}
.attribution a { color: #0090b4; }
.flag { width: 24px; height: 16px; background: linear-gradient(180deg, #0090dc 50%, #ffd000 50%); }

.insights-head { margin-top: 27px; }
.chevron { width: 32px; height: 32px; fill: currentColor; }
.insight { height: 257px; overflow: hidden; margin-top: 23px; padding: 23px 24px 0; border-radius: 20px 20px 0 0; background: #001a22; }
.insight-title { display: flex; align-items: center; gap: 16px; font-size: 32px; font-weight: 700; letter-spacing: -.1px; line-height: 38px; color: #00d8f5; }
.insight-title svg { width: 32px; height: 32px; fill: currentColor; }
.insight-text { margin: 14px 0 14px; font-size: 25.4px; line-height: 34px; }
.forecast {
  display: flex; justify-content: space-between; align-items: center;
  height: 68px; margin-bottom: 12px; padding: 0 16px; border-radius: 12px;
  background: #001c26; font-size: 30.4px;
}
.forecast strong { font-size: 31.8px; font-weight: 650; letter-spacing: -.1px; color: #ff5c93; }

.view-all { font-size: 23.6px; color: #00b4ef; }
.products { display: grid; grid-template-columns: 1fr 1fr; gap: 24px 25px; margin-top: 22px; }
.product {
  display: flex; flex-direction: column; height: 156px; padding: 17px 20px 0;
  border-radius: 20px; background: #001720; font-size: 25.5px; line-height: 40px;
}
.product b { font-size: 25.9px; font-weight: 600; }
.product-stat { display: flex; justify-content: space-between; margin-top: 4px; }
.product-stat strong { font-size: 26px; }
.good { color: #00d9a6; }
.bad { color: #ff5c93; }

.orders-head { margin-top: 38px; }
.orders { margin-top: 46px; }
.order {
  display: grid; grid-template-columns: 146px 219px 156px 1fr; align-items: center;
  height: 74px; padding-left: 12px; border-bottom: 2px dashed #011821; font-size: 25.4px;
}
.order:last-child { border-bottom: 0; height: 72px; }
.order strong { font-size: 26px; }
.order-header { height: 66px; color: #7fadd2; font-weight: 600; font-size: 24.9px; }
```
